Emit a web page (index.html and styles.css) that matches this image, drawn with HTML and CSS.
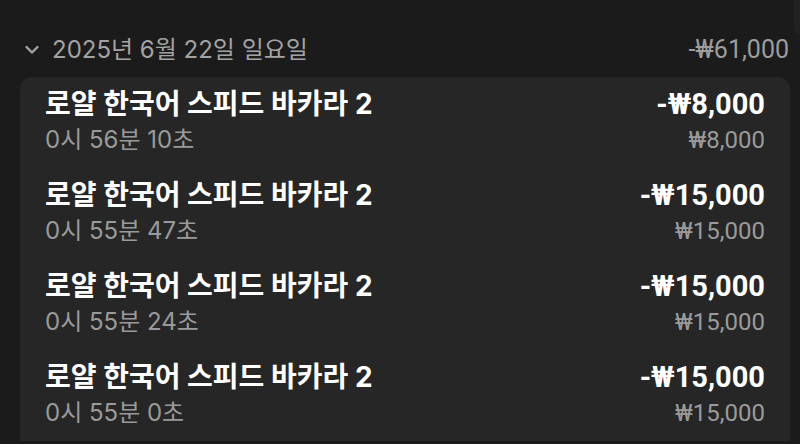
FILE: index.html
```html
<!DOCTYPE html>
<html lang="ko">
<head>
<meta charset="utf-8">
<link rel="stylesheet" href="styles.css">
</head>
<body>
<div class="page">
  <div class="prev"><div class="prev-edge"></div></div>
  <div class="day-head">
    <div class="day-left">
      <svg class="chev" width="16" height="16" viewBox="0 0 16 16"><path d="M2.5 5 L8 10.5 L13.5 5" fill="none" stroke="#a3a3a3" stroke-width="2.4" stroke-linecap="round" stroke-linejoin="round"/></svg>
      <span class="day-date">2025년 6월 22일 일요일</span>
    </div>
    <span class="day-total">-₩61,000</span>
  </div>
  <div class="card">
    <div class="row">
      <div class="col">
        <div class="title">로얄 한국어 스피드 바카라 2</div>
        <div class="sub">0시 56분 10초</div>
      </div>
      <div class="col right">
        <div class="amt">-₩8,000</div>
        <div class="sub-amt">₩8,000</div>
      </div>
    </div>
    <div class="row">
      <div class="col">
        <div class="title">로얄 한국어 스피드 바카라 2</div>
        <div class="sub">0시 55분 47초</div>
      </div>
      <div class="col right">
        <div class="amt">-₩15,000</div>
        <div class="sub-amt">₩15,000</div>
      </div>
    </div>
    <div class="row">
      <div class="col">
        <div class="title">로얄 한국어 스피드 바카라 2</div>
        <div class="sub">0시 55분 24초</div>
      </div>
      <div class="col right">
        <div class="amt">-₩15,000</div>
        <div class="sub-amt">₩15,000</div>
      </div>
    </div>
    <div class="row">
      <div class="col">
        <div class="title">로얄 한국어 스피드 바카라 2</div>
        <div class="sub">0시 55분 0초</div>
      </div>
      <div class="col right">
        <div class="amt">-₩15,000</div>
        <div class="sub-amt">₩15,000</div>
      </div>
    </div>
  </div>
</div>
</body>
</html>
```
FILE: styles.css
```css
html, body {
  margin: 0;
  padding: 0;
  background: #1b1b1b;
}
body {
  width: 800px;
  height: 444px;
  overflow: hidden;
  font-family: "Inter", "Noto Sans CJK KR", sans-serif;
  color: #ffffff;
}
.page {
  display: flex;
  flex-direction: column;
}
.prev {
  height: 35px;
  display: flex;
  justify-content: flex-end;
}
.prev-edge {
  width: 6px;
  background: #212121;
  border-bottom-left-radius: 8px;
}
.day-head {
  height: 30px;
  display: flex;
  align-items: center;
  justify-content: space-between;
  padding: 0 11px 0 24px;
  margin-bottom: 12px;
}
.day-left {
  display: flex;
  align-items: center;
  gap: 12px;
}
.chev {
  display: block;
}
.day-date {
  font-size: 24px;
  color: #a3a3a3;
  line-height: 30px;
}
.day-total {
  font-family: "Roboto", "Noto Sans CJK KR", sans-serif;
  font-size: 25px;
  color: #9d9d9d;
  line-height: 30px;
}
.card {
  margin-left: 20px;
  width: 770px;
  background: #262626;
  border-radius: 12px 12px 0 0;
  box-sizing: border-box;
  padding: 0 25px;
  display: flex;
  flex-direction: column;
}
.row {
  display: flex;
  justify-content: space-between;
  padding: 12px 0 13px;
}
.col {
  display: flex;
  flex-direction: column;
  gap: 6px;
}
.col.right {
  align-items: flex-end;
}
.title {
  font-size: 28px;
  font-weight: 700;
  line-height: 30px;
  color: #ffffff;
}
.amt {
  font-family: "Roboto", "Noto Sans CJK KR", sans-serif;
  font-size: 29px;
  font-weight: 700;
  line-height: 30px;
  color: #ffffff;
}
.sub {
  font-size: 24px;
  line-height: 30px;
  color: #9a9a9a;
}
.sub-amt {
  font-family: "Roboto", "Noto Sans CJK KR", sans-serif;
  font-size: 24px;
  line-height: 30px;
  color: #9a9a9a;
}
```
